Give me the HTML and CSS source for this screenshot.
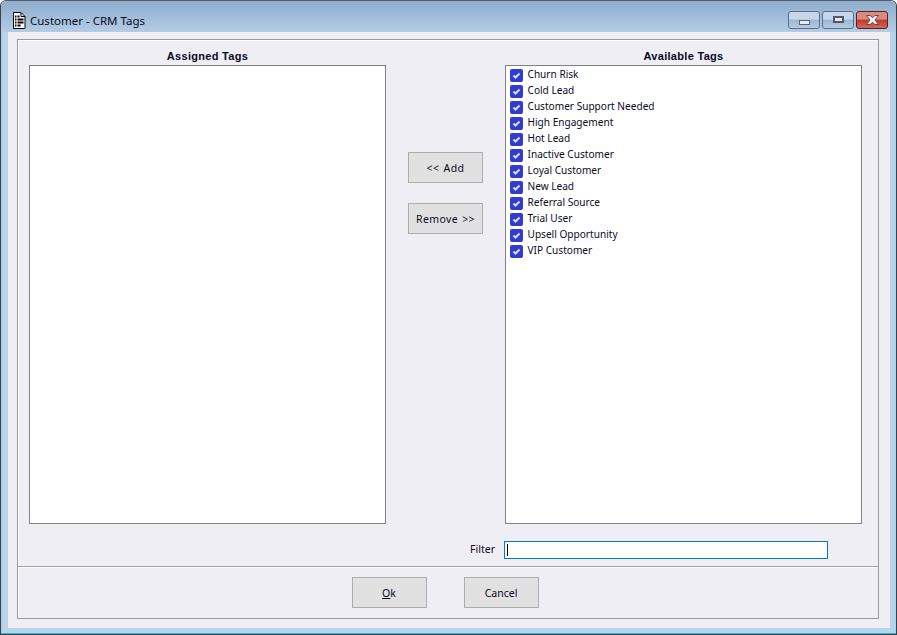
FILE: index.html
```html
<!DOCTYPE html>
<html lang="en">
<head>
<meta charset="utf-8">
<title>Customer - CRM Tags</title>
<link rel="stylesheet" href="styles.css">
</head>
<body>
<div class="window">
  <header class="titlebar">
    <svg class="doc-icon" width="14" height="17" viewBox="0 0 14 17">
      <path d="M1.500.5h7.500l4 4v12h-11.500z" fill="#fff" stroke="#000"/>
      <path d="M9 1v3.500h4" fill="none" stroke="#000"/>
      <path d="M3 4.500h1.500M5.500 4.500h2M3 7.500h1.500M5.500 7.500h6M3 10.500h1.500M5.500 10.500h6M3 13.500h1.500M5.500 13.500h3" stroke="#000" stroke-width="2"/>
    </svg>
    <span class="title">Customer - CRM Tags</span>
    <div class="caption-buttons">
      <div class="cap cap-min"><span class="glyph-min"></span></div>
      <div class="cap cap-max"><span class="glyph-max"></span></div>
      <div class="cap cap-close">
        <svg width="13" height="10" viewBox="0 0 13 10"><path d="M.500.500h3.500l2.500 2 2.500-2h3.500L9 5l3.500 4.500H9L6.500 7.500 4 9.500H.500L4 5z" fill="#f2f2f2" stroke="#55303a" stroke-width=".8"/></svg>
      </div>
    </div>
  </header>
  <main class="client">
    <div class="panel">
      <section class="top">
        <div class="column">
          <h2 class="col-title">Assigned Tags</h2>
          <div class="listbox"></div>
        </div>
        <div class="mid-buttons">
          <button class="btn btn-arrow">&lt;&lt; Add</button>
          <button class="btn btn-arrow">Remove &gt;&gt;</button>
        </div>
        <div class="column">
          <h2 class="col-title">Available Tags</h2>
          <ul class="listbox tags">
            <li><span class="check"><svg width="13" height="13" viewBox="0 0 13 13"><path d="M3.500 6.500l2 2 4-4" fill="none" stroke="#dfe3ff" stroke-width="2"/></svg></span>Churn Risk</li>
            <li><span class="check"><svg width="13" height="13" viewBox="0 0 13 13"><path d="M3.500 6.500l2 2 4-4" fill="none" stroke="#dfe3ff" stroke-width="2"/></svg></span>Cold Lead</li>
            <li><span class="check"><svg width="13" height="13" viewBox="0 0 13 13"><path d="M3.500 6.500l2 2 4-4" fill="none" stroke="#dfe3ff" stroke-width="2"/></svg></span>Customer Support Needed</li>
            <li><span class="check"><svg width="13" height="13" viewBox="0 0 13 13"><path d="M3.500 6.500l2 2 4-4" fill="none" stroke="#dfe3ff" stroke-width="2"/></svg></span>High Engagement</li>
            <li><span class="check"><svg width="13" height="13" viewBox="0 0 13 13"><path d="M3.500 6.500l2 2 4-4" fill="none" stroke="#dfe3ff" stroke-width="2"/></svg></span>Hot Lead</li>
            <li><span class="check"><svg width="13" height="13" viewBox="0 0 13 13"><path d="M3.500 6.500l2 2 4-4" fill="none" stroke="#dfe3ff" stroke-width="2"/></svg></span>Inactive Customer</li>
            <li><span class="check"><svg width="13" height="13" viewBox="0 0 13 13"><path d="M3.500 6.500l2 2 4-4" fill="none" stroke="#dfe3ff" stroke-width="2"/></svg></span>Loyal Customer</li>
            <li><span class="check"><svg width="13" height="13" viewBox="0 0 13 13"><path d="M3.500 6.500l2 2 4-4" fill="none" stroke="#dfe3ff" stroke-width="2"/></svg></span>New Lead</li>
            <li><span class="check"><svg width="13" height="13" viewBox="0 0 13 13"><path d="M3.500 6.500l2 2 4-4" fill="none" stroke="#dfe3ff" stroke-width="2"/></svg></span>Referral Source</li>
            <li><span class="check"><svg width="13" height="13" viewBox="0 0 13 13"><path d="M3.500 6.500l2 2 4-4" fill="none" stroke="#dfe3ff" stroke-width="2"/></svg></span>Trial User</li>
            <li><span class="check"><svg width="13" height="13" viewBox="0 0 13 13"><path d="M3.500 6.500l2 2 4-4" fill="none" stroke="#dfe3ff" stroke-width="2"/></svg></span>Upsell Opportunity</li>
            <li><span class="check"><svg width="13" height="13" viewBox="0 0 13 13"><path d="M3.500 6.500l2 2 4-4" fill="none" stroke="#dfe3ff" stroke-width="2"/></svg></span>VIP Customer</li>
          </ul>
        </div>
      </section>
      <div class="filter-row">
        <label class="filter-label">Filter</label>
        <div class="filter-input"><span class="caret"></span></div>
      </div>
      <footer class="actions">
        <button class="btn"><span class="ul">O</span>k</button>
        <button class="btn">Cancel</button>
      </footer>
    </div>
  </main>
</div>
</body>
</html>
```

FILE: styles.css
```css
* { box-sizing: border-box; }
html, body { margin: 0; height: 100%; overflow: hidden; }
body { background: #fff; font-family: "Noto Sans", sans-serif; color: #0a0a1e; }
.window {
  width: 897px; height: 635px; display: flex; flex-direction: column;
  border: 1px solid #3c4148; border-top-color: #5a5f66; border-radius: 6px 6px 0 0;
  background: #bcd2ea; padding: 0 6px 0 7px;
  box-shadow: inset 0 -1px 0 #12c4e4, inset -1px 0 0 #9fd8ee, inset 1px 0 0 #9fd0ea;
}
.titlebar {
  height: 31px; flex: none; display: flex; align-items: center;
  margin: 0 -6px 0 -7px; padding: 7px 8px 0 11px;
  background: linear-gradient(#8eaccd, #b3cce6);
  border-radius: 5px 5px 0 0;
}
.doc-icon { flex: none; margin-right: 4px; margin-top: 1px; }
.title { font: 11.500px "Noto Sans", sans-serif; color: #0d0d14; flex: 1; margin-top: 1px; }
.caption-buttons { display: flex; gap: 2px; }
.cap {
  width: 32px; height: 18px; border: 1px solid #5b7088; border-radius: 3px;
  display: flex; align-items: center; justify-content: center;
  background: linear-gradient(#c5d7ea 0 45%, #9db6d0 50%, #b4cbe2);
}
.cap-close { border-color: #5c1f28; background: linear-gradient(#dc8a7e 0 45%, #bc3a2a 50%, #d16a58); }
.glyph-min { width: 11px; height: 5px; margin-top: 5px; background: #e8ecf0; border: 1px solid #5c6672; }
.glyph-max { width: 11px; height: 7px; margin-top: -1px; border: 2px solid #4e5a68; background: #dfe7ef; }
.client { flex: 1; background: #eeeef4; padding: 7px 11px 9px 9px; margin-bottom: 6px; min-height: 0; }
.panel {
  height: 100%; display: flex; flex-direction: column;
  border: 1px solid #9a9a9e; box-shadow: inset 1px 1px 0 #fff;
}
.top { display: flex; padding: 9px 0 0 11px; }
.column { width: 357px; display: flex; flex-direction: column; }
.col-title {
  margin: 0; height: 16px; text-align: center; font: bold 11px/14px "Liberation Sans", sans-serif; color: #0a0a1e;
  letter-spacing: .3px;
}
.listbox {
  height: 459px; margin: 0; padding: 0 0 0 4px; list-style: none; background: #fff;
  border: 1px solid #808088;
}
.tags li { height: 16px; display: flex; align-items: center; font: 10.100px/16px "Noto Sans", sans-serif; color: #0a0a1e; white-space: nowrap; }
.check {
  width: 13px; height: 13px; background: #2e3bd6; border-radius: 2px; margin: 3px 4.500px 0 0; flex: none;
  display: flex;
}
.mid-buttons { width: 119px; display: flex; flex-direction: column; align-items: center; padding-top: 103px; gap: 20px; }
.btn {
  width: 75px; height: 31px; padding: 0; background: #e1e1e1; border: 1px solid #adadad; border-radius: 0;
  font: 10.500px "Noto Sans", sans-serif; color: #0a0a1e; display: block;
}
.btn-arrow { letter-spacing: .4px; word-spacing: 1px; }
.ul { text-decoration: underline; }
.filter-row { display: flex; align-items: center; height: 18px; margin-top: 17px; }
.filter-label { width: 477px; margin-top: -2px; text-align: right; font: 10.500px "Noto Sans", sans-serif; color: #0a0a1e; }
.filter-input { width: 324px; height: 18px; margin-left: 9px; border: 1px solid #0078d7; background: #fff; padding: 2px 0 2px 2px; }
.caret { display: block; width: 1px; height: 12px; background: #000; }
.actions {
  flex: 1; margin-top: 7px; display: flex; justify-content: center; gap: 37px; padding: 10px 6px 0 0;
  border-top: 1px solid #a0a0a0; box-shadow: inset 0 1px 0 #fff;
}
```
